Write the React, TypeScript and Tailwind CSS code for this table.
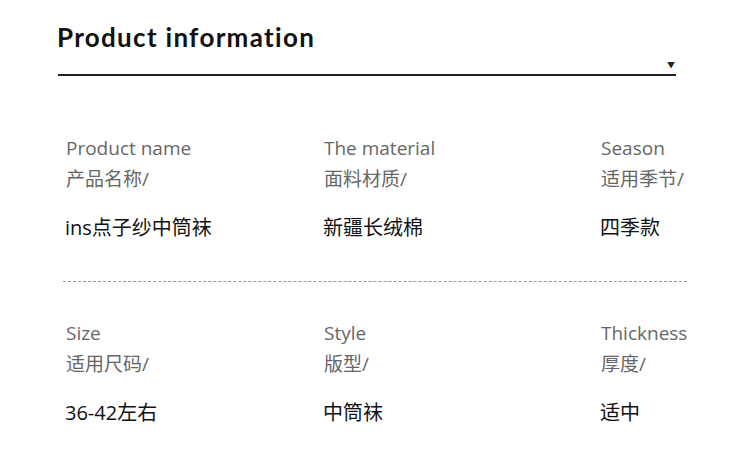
export default function App() {
  const rows = [
    [
      { en: 'Product name', zh: '产品名称/', value: 'ins点子纱中筒袜' },
      { en: 'The material', zh: '面料材质/', value: '新疆长绒棉' },
      { en: 'Season', zh: '适用季节/', value: '四季款' },
    ],
    [
      { en: 'Size', zh: '适用尺码/', value: '36-42左右' },
      { en: 'Style', zh: '版型/', value: '中筒袜' },
      { en: 'Thickness', zh: '厚度/', value: '适中' },
    ],
  ]

  return (
    <div className="h-[470px] w-[750px] bg-white" style={{ fontFamily: '"Open Sans", "Noto Sans CJK SC", sans-serif' }}>
      <div className="pl-[57px] pt-[20px]">
        <h1 className="text-[26px] font-bold leading-[34px] tracking-[1.3px] text-[#111]" style={{ fontFamily: 'Lato, "Noto Sans", sans-serif' }}>
          Product information
        </h1>
      </div>
      <div className="relative ml-[58px] mt-[20px] h-[2px] w-[618px] bg-[#222]">
        <span className="absolute right-[1px] top-[-13px] text-[8px] leading-none text-[#222]">▼</span>
      </div>

      <div className="pt-[61px]">
        {rows.map((row, i) => (
          <div key={i}>
            {i > 0 && <div className="ml-[63px] mb-[40px] mt-[41px] w-[624px] border-t border-dashed border-[#999]" />}
            <div className="grid grid-cols-[258px_277px_1fr] pl-[66px]">
              {row.map((c) => (
                <div key={c.en} className="flex flex-col">
                  <span className="text-[19px] leading-[22px] text-[#666]">{c.en}</span>
                  <span className="mt-[9px] text-[19px] leading-[22px] text-[#666]">{c.zh}</span>
                  <span className="-ml-[1px] mt-[26px] text-[20px] leading-[24px] text-[#111]">{c.value}</span>
                </div>
              ))}
            </div>
          </div>
        ))}
      </div>
    </div>
  )
}
